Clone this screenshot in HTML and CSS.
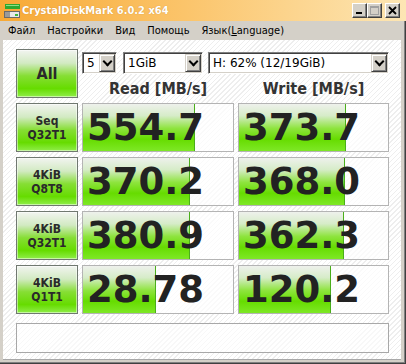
FILE: index.html
```html
<!DOCTYPE html>
<html lang="ru">
<head>
  <meta charset="UTF-8" />
  <title>CrystalDiskMark 6.0.2 x64</title>
  <link rel="stylesheet" href="styles.css">
</head>
<body>
  <div class="window">
    <!-- Title bar -->
    <div class="titlebar">
      <svg class="app-icon" width="16" height="16" viewBox="0 0 16 16">
        <rect x="1" y="1" width="15" height="5" fill="#2fa82f"/>
        <rect x="2" y="2" width="13" height="1" fill="#8be08b"/>
        <rect x="0.5" y="8.5" width="15" height="6" fill="#e8e8e8" stroke="#6a6a6a"/>
        <rect x="1" y="9" width="5" height="5" fill="#9a9a9a"/>
        <rect x="11" y="11" width="3" height="2" fill="#3cb83c"/>
      </svg>
      <span class="title">CrystalDiskMark 6.0.2 x64</span>
      <div class="caption-buttons">
        <span class="cap-btn">
          <svg width="9" height="9" viewBox="0 0 9 9"><rect x="1" y="6" width="6" height="2" fill="#000"/></svg>
        </span>
        <span class="cap-btn">
          <svg width="9" height="9" viewBox="0 0 9 9"><rect x="0.5" y="0.5" width="8" height="8" fill="none" stroke="#a0a0a0"/><rect x="1" y="1" width="7" height="1" fill="#a0a0a0"/></svg>
        </span>
        <span class="cap-btn close">
          <svg width="9" height="9" viewBox="0 0 9 9"><path d="M1 1 L8 8 M8 1 L1 8" stroke="#000" stroke-width="1.8"/></svg>
        </span>
      </div>
    </div>

    <!-- Menu -->
    <div class="menubar">
      <span>Файл</span>
      <span>Настройки</span>
      <span>Вид</span>
      <span>Помощь</span>
      <span>Язык(<u>L</u>anguage)</span>
    </div>

    <!-- Client area -->
    <div class="client">
      <div class="grid">
        <div class="btn all">All</div>
        <div class="controls">
          <div class="selects">
            <div class="select s-count"><span>5</span><i class="arrow"></i></div>
            <div class="select s-size"><span>1GiB</span><i class="arrow"></i></div>
            <div class="select s-drive"><span>H: 62% (12/19GiB)</span><i class="arrow"></i></div>
          </div>
          <div class="heads">
            <div>Read [MB/s]</div>
            <div>Write [MB/s]</div>
          </div>
        </div>

        <div class="btn lbl">Seq<br>Q32T1</div>
        <div class="result" style="--fill: 112px">554.7</div>
        <div class="result" style="--fill: 107px">373.7</div>

        <div class="btn lbl">4KiB<br>Q8T8</div>
        <div class="result" style="--fill: 107px">370.2</div>
        <div class="result" style="--fill: 106px">368.0</div>

        <div class="btn lbl">4KiB<br>Q32T1</div>
        <div class="result" style="--fill: 107px">380.9</div>
        <div class="result" style="--fill: 105px">362.3</div>

        <div class="btn lbl">4KiB<br>Q1T1</div>
        <div class="result" style="--fill: 73px">28.78</div>
        <div class="result" style="--fill: 92px">120.2</div>
      </div>

      <div class="comment"></div>
    </div>
  </div>
</body>
</html>
```

FILE: styles.css
```css
/* Base */
body {
  margin: 0;
  width: 406px;
  height: 364px;
  overflow: hidden;
  font-family: "DejaVu Sans", sans-serif;
  color: #000;
}

.window {
  height: 364px;
  display: flex;
  flex-direction: column;
  background: #d4d0c8;
  box-shadow: inset -1px -1px #404040, inset -2px -2px #808080;
}

/* Title bar */
.titlebar {
  height: 21px;
  flex: none;
  display: flex;
  align-items: center;
  padding: 0 6px 0 4px;
  background: linear-gradient(to right, #f7a935, #fbc46a 45%, #fde6b4);
}

.app-icon {
  flex: none;
}

.title {
  margin-left: 2px;
  color: #fff;
  font: bold 11px "DejaVu Sans Condensed", "DejaVu Sans", sans-serif;
  text-shadow: 0 0 1px rgba(160, 90, 0, 0.5);
}

.caption-buttons {
  margin-left: auto;
  display: flex;
  align-items: center;
}

.cap-btn {
  width: 15px;
  height: 15px;
  box-sizing: border-box;
  display: flex;
  align-items: center;
  justify-content: center;
  background: #d4d0c8;
  border: 1px solid;
  border-color: #fff #404040 #404040 #fff;
  box-shadow: inset -1px -1px #808080;
}

.cap-btn.close {
  margin-left: 3px;
}

/* Menu */
.menubar {
  height: 19px;
  flex: none;
  display: flex;
  align-items: center;
  padding-left: 2px;
  font: 11px "DejaVu Sans Condensed", "DejaVu Sans", sans-serif;
}

.menubar span {
  padding: 0 6px;
}

/* Client area */
.client {
  flex: 1;
  margin: 0 5px 4px 3px;
  padding: 9px 0 0 13px;
  border-bottom: 1px solid #a8a8a8;
  background: repeating-linear-gradient(135deg, #fff 0 2.5px, #eeeeee 2.5px 3.5px);
}

.grid {
  display: grid;
  grid-template-columns: 62px 152px 151px;
  grid-auto-rows: 49px;
  column-gap: 4px;
  row-gap: 5px;
}

/* Green buttons */
.btn {
  box-sizing: border-box;
  display: flex;
  align-items: center;
  justify-content: center;
  text-align: center;
  color: #2a2a2a;
  border: 1px solid #707870;
  box-shadow: inset 0 0 0 1px rgba(255, 255, 255, 0.5);
  background: linear-gradient(to bottom, #f2f4f0 0%, #d2eac2 28%, #86de34 55%, #66dc00 82%, #90ee4a 100%);
}

.all {
  font: bold 16px "DejaVu Sans Condensed", "DejaVu Sans", sans-serif;
}

.lbl {
  font: bold 12px/14px "DejaVu Sans Condensed", "DejaVu Sans", sans-serif;
}

/* Selects and headers */
.controls {
  grid-column: 2 / 4;
  display: flex;
  flex-direction: column;
}

.selects {
  display: flex;
  margin-top: 3px;
  height: 22px;
}

.select {
  box-sizing: border-box;
  height: 22px;
  display: flex;
  align-items: center;
  padding: 0 1px 0 3px;
  background: #fff;
  border: 1px solid;
  border-color: #808080 #fff #fff #808080;
  box-shadow: inset 1px 1px #404040, inset -1px -1px #d4d0c8;
  font: 12px "DejaVu Sans", sans-serif;
}

.select span {
  flex: 1;
  padding-left: 1px;
}

.s-count { width: 35px; }
.s-size  { width: 80px; margin-left: 6px; }
.s-drive { width: 181px; margin-left: 5px; }

.arrow {
  width: 16px;
  height: 18px;
  box-sizing: border-box;
  background: #d4d0c8;
  border: 1px solid;
  border-color: #d4d0c8 #404040 #404040 #d4d0c8;
  box-shadow: inset 1px 1px #fff, inset -1px -1px #808080;
  position: relative;
}

.arrow::after {
  content: "";
  position: absolute;
  left: 4px;
  top: 3px;
  width: 5px;
  height: 5px;
  border: solid #000;
  border-width: 0 2px 2px 0;
  transform: rotate(45deg);
}

.heads {
  display: grid;
  grid-template-columns: 152px 151px;
  column-gap: 4px;
  padding-top: 3px;
  font: bold 16px/24px "DejaVu Sans Condensed", "DejaVu Sans", sans-serif;
  color: #333;
  text-align: center;
}

/* Results */
.result {
  box-sizing: border-box;
  display: flex;
  align-items: center;
  padding-left: 4px;
  border: 1px solid #b4b4b4;
  font: bold 37px "DejaVu Sans", sans-serif;
  color: #222;
  background:
    linear-gradient(#4aae1a, #4aae1a) no-repeat calc(var(--fill) - 1px) 0 / 1px 100%,
    linear-gradient(to bottom, #eef1ec 0%, #d6ecc8 25%, #8ee43e 52%, #66dc00 75%, #7ee826 100%) no-repeat 0 0 / var(--fill) 100%,
    rgba(255, 255, 255, 0.7);
}

.comment {
  margin-top: 9px;
  width: 373px;
  height: 30px;
  box-sizing: border-box;
  border: 1px solid #a8a8a8;
  background: rgba(255, 255, 255, 0.6);
}
```
